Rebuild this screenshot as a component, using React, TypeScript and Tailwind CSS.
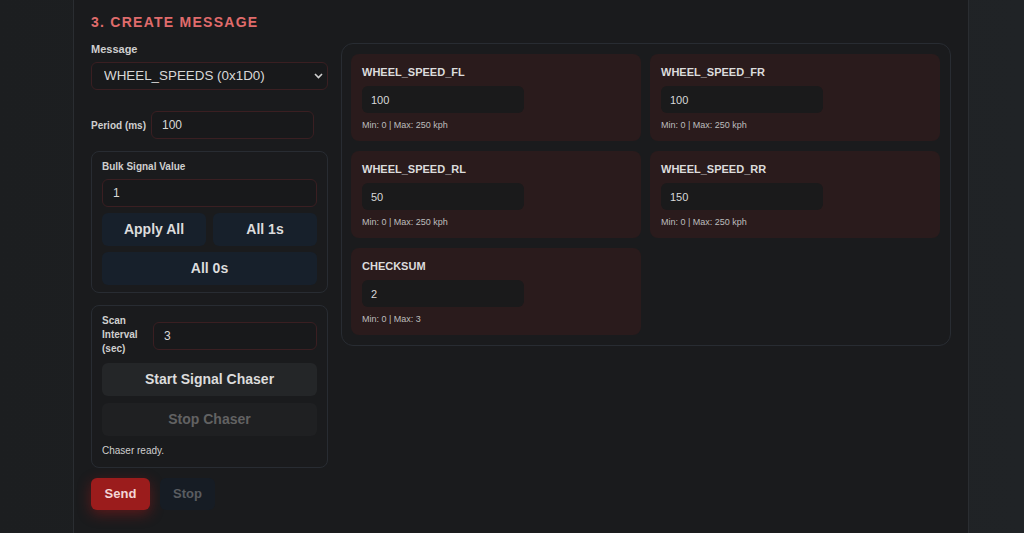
import { useState } from 'react';

type Signal = { name: string; value: string; hint: string };

const SIGNALS: Signal[] = [
  { name: 'WHEEL_SPEED_FL', value: '100', hint: 'Min: 0 | Max: 250 kph' },
  { name: 'WHEEL_SPEED_FR', value: '100', hint: 'Min: 0 | Max: 250 kph' },
  { name: 'WHEEL_SPEED_RL', value: '50', hint: 'Min: 0 | Max: 250 kph' },
  { name: 'WHEEL_SPEED_RR', value: '150', hint: 'Min: 0 | Max: 250 kph' },
  { name: 'CHECKSUM', value: '2', hint: 'Min: 0 | Max: 3' },
];

const inputCls =
  'h-[28px] rounded-md border border-[#3a1f22] bg-[#18191b] px-[10px] text-[12px] text-[#d8d8d8] outline-none';

const App = () => {
  const [signals, setSignals] = useState(SIGNALS);
  const [bulk, setBulk] = useState('1');
  const [period, setPeriod] = useState('100');
  const [scan, setScan] = useState('3');

  return (
    <div className="h-[533px] w-[1024px] overflow-hidden bg-gradient-to-r from-[#1c1e20] to-[#202326] font-['Liberation_Sans',Arial,sans-serif]">
      <div className="ml-[73px] h-full w-[896px] border-x border-[#2a2d31] bg-[#1a1b1d] px-[17px] pt-[12px]">
        <h2 className="text-[14px] font-bold uppercase leading-[20px] tracking-[0.09em] text-[#e06c6c]">
          3. Create Message
        </h2>

        <div className="mt-[11px] flex gap-[13px]">
          {/* left column */}
          <div className="w-[237px] shrink-0">
            <label className="block text-[11px] font-bold leading-[12px] text-[#cfcfcf]">Message</label>
            <div className="relative mt-[7px]">
              <select className="h-[28px] w-full appearance-none rounded-md border border-[#3a1f22] bg-[#18191b] pl-[12px] text-[13.4px] text-[#d8d8d8] outline-none">
                <option>WHEEL_SPEEDS (0x1D0)</option>
              </select>
              <svg className="pointer-events-none absolute right-[5px] top-[11px]" width="9" height="6" viewBox="0 0 9 6">
                <path d="M1 1l3.5 3.5L8 1" stroke="#d0d0d0" strokeWidth="1.6" fill="none" />
              </svg>
            </div>

            <div className="mt-[21px] flex items-center gap-[5px]">
              <span className="text-[10px] font-bold text-[#cfcfcf]">Period (ms)</span>
              <input
                value={period}
                onChange={(e) => setPeriod(e.target.value)}
                className={`${inputCls} w-[163px]`}
              />
            </div>

            <div className="mt-[12px] rounded-lg border border-[#282c32] px-[10px] pb-[7px] pt-[9px]">
              <div className="text-[10px] font-bold leading-[12px] text-[#cfcfcf]">Bulk Signal Value</div>
              <input
                value={bulk}
                onChange={(e) => setBulk(e.target.value)}
                className={`${inputCls} mt-[6px] w-full`}
              />
              <div className="mt-[6px] grid grid-cols-2 gap-[7px]">
                <button className="h-[33px] rounded-md bg-[#17202b] text-[14px] font-bold text-[#dcdcdc]">Apply All</button>
                <button className="h-[33px] rounded-md bg-[#17202b] text-[14px] font-bold text-[#dcdcdc]">All 1s</button>
              </div>
              <button
                onClick={() => setSignals((s) => s.map((x) => ({ ...x, value: '0' })))}
                className="mt-[6px] h-[33px] w-full rounded-md bg-[#17202b] text-[14px] font-bold text-[#dcdcdc]"
              >
                All 0s
              </button>
            </div>

            <div className="mt-[12px] rounded-lg border border-[#282c32] px-[10px] pb-[10px] pt-[8px]">
              <div className="flex items-start gap-[6px]">
                <span className="w-[45px] shrink-0 text-[10px] font-bold leading-[14px] text-[#cfcfcf]">Scan Interval (sec)</span>
                <input
                  value={scan}
                  onChange={(e) => setScan(e.target.value)}
                  className={`${inputCls} mt-[8px] w-0 min-w-0 flex-1`}
                />
              </div>
              <button className="mt-[7px] h-[33px] w-full rounded-md bg-[#242628] text-[14px] font-bold text-[#dcdcdc]">
                Start Signal Chaser
              </button>
              <button disabled className="mt-[7px] h-[33px] w-full rounded-md bg-[#1f2022] text-[14px] font-bold text-[#626262]">
                Stop Chaser
              </button>
              <div className="mt-[9px] text-[10px] leading-[12px] text-[#cfcfcf]">Chaser ready.</div>
            </div>

            <div className="mt-[10px] flex gap-[10px]">
              <button className="h-[32px] w-[59px] rounded-md bg-[#9b1c1c] text-[13px] font-bold text-[#f3d6d6] shadow-[0_4px_14px_rgba(170,25,25,0.45)]">
                Send
              </button>
              <button disabled className="h-[32px] w-[55px] rounded-md bg-[#161c24] text-[13px] font-bold text-[#5a5d61]">
                Stop
              </button>
            </div>
          </div>

          {/* signal panel */}
          <div className="h-[303px] flex-1 rounded-xl border border-[#282c32] pb-[9px] pl-[9px] pr-[10px] pt-[10px]">
            <div className="grid grid-cols-2 gap-x-[9px] gap-y-[10px]">
              {signals.map((s, i) => (
                <div key={s.name} className="h-[87px] rounded-lg bg-[#2a1b1c] px-[11px] pt-[11px]">
                  <div className="text-[11px] font-bold leading-[14px] text-[#dcdcdc]">{s.name}</div>
                  <input
                    value={s.value}
                    onChange={(e) =>
                      setSignals((arr) => arr.map((x, j) => (j === i ? { ...x, value: e.target.value } : x)))
                    }
                    className="mt-[7px] h-[27px] w-[162px] rounded-md bg-[#1a1a1b] px-[9px] text-[11px] text-[#d8d8d8] outline-none"
                  />
                  <div className="mt-[6px] text-[9px] text-[#bdbdbd]">{s.hint}</div>
                </div>
              ))}
            </div>
          </div>
        </div>
      </div>
    </div>
  );
};

export default App;
